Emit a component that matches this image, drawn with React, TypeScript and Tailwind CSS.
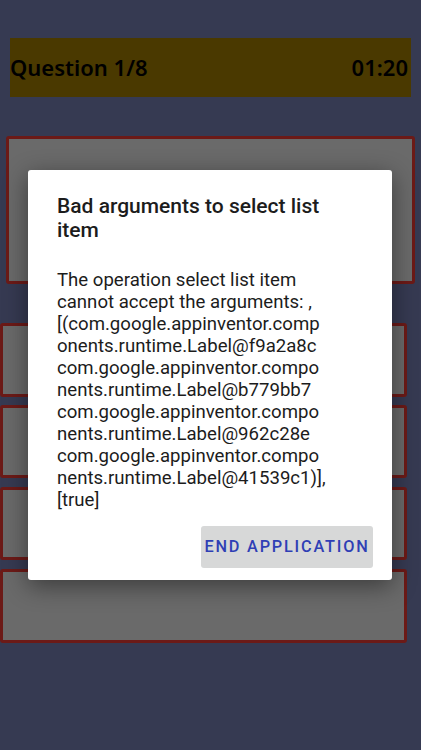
import React from 'react';

const lines = [
  'The operation select list item',
  'cannot accept the arguments: ,',
  '[(com.google.appinventor.comp',
  'onents.runtime.Label@f9a2a8c',
  'com.google.appinventor.compo',
  'nents.runtime.Label@b779bb7',
  'com.google.appinventor.compo',
  'nents.runtime.Label@962c28e',
  'com.google.appinventor.compo',
  'nents.runtime.Label@41539c1)],',
  '[true]',
];

const Card = ({ className }: { className: string }) => (
  <div className={`border-[3px] border-[#6c1a17] bg-[#6a6a6a] rounded-[3px] ${className}`} />
);

export default function App() {
  return (
    <div className="relative w-[421px] h-[750px] bg-[#363a52] overflow-hidden" style={{ fontFamily: 'Roboto, sans-serif' }}>
      <div className="pt-[38px] px-[10px]">
        <div
          className="h-[59px] bg-[#4a3900] flex items-center justify-between pr-[3px] text-black font-semibold text-[22px]"
          style={{ fontFamily: '"Noto Sans", sans-serif' }}
        >
          <span>Question 1/8</span>
          <span>01:20</span>
        </div>
      </div>

      <div className="flex flex-col">
        <Card className="mt-[39px] mx-[6px] h-[148px]" />
        <Card className="mt-[39px] mr-[14px] h-[74px]" />
        <Card className="mt-[8px] mr-[14px] h-[73px]" />
        <Card className="mt-[9px] mr-[14px] h-[73px]" />
        <Card className="mt-[9px] mr-[14px] h-[74px]" />
      </div>

      <div className="absolute left-[28px] top-[170px] w-[364px] bg-white rounded-[3px] shadow-[0_6px_24px_rgba(0,0,0,0.45)] pt-[24px] pb-[12px]">
        <div className="px-[29px] text-[21px] leading-[24px] font-medium text-[#1c1c1c]">
          Bad arguments to select list item
        </div>
        <div className="px-[29px] mt-[27px] text-[18.6px] leading-[22px] text-[#1c1c1c]">
          {lines.map((l, i) => (
            <div key={i} className="whitespace-nowrap">{l}</div>
          ))}
        </div>
        <div className="flex justify-end pr-[19px] mt-[15px]">
          <button className="h-[42px] w-[172px] bg-[#d7d8d8] rounded-[3px] text-[#2f3fb5] text-[16.3px] font-medium tracking-[1.8px]">
            END APPLICATION
          </button>
        </div>
      </div>
    </div>
  );
}
